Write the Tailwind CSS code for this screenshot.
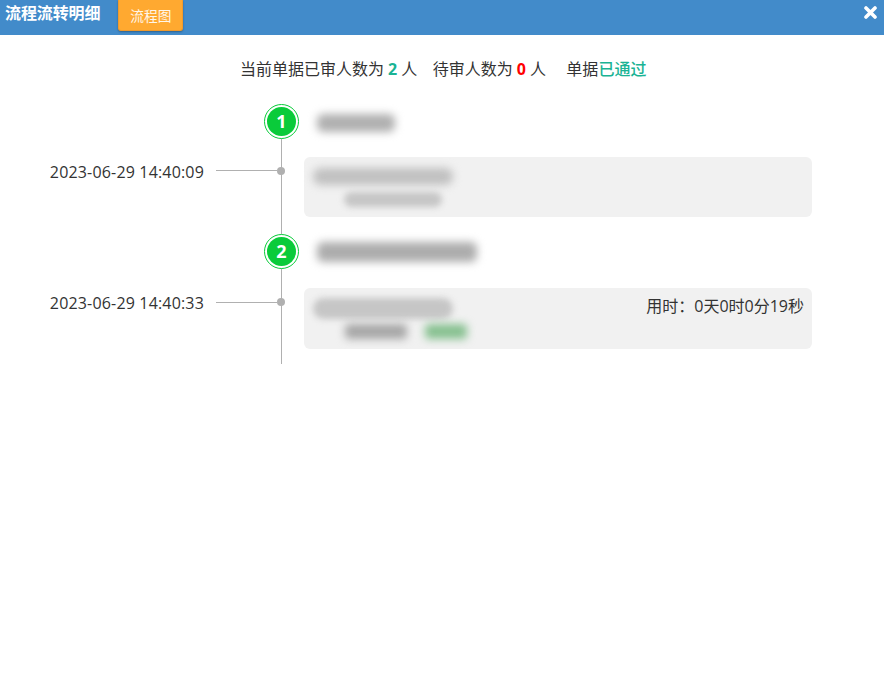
<!DOCTYPE html>
<html lang="zh">
<head>
<meta charset="utf-8" />
<title>流程流转明细</title>
<script src="https://cdn.jsdelivr.net/npm/@tailwindcss/browser@4"></script>
</head>
<body class="bg-white text-[#333] text-base font-['Open_Sans','Noto_Sans_CJK_SC',sans-serif]">
  <!-- header -->
  <div class="h-[35px] bg-[#428bca] flex items-start justify-between pl-[5px] pr-[7px]">
    <div class="flex items-start">
      <h1 class="text-base font-bold text-white leading-[27px] tracking-[-0.1px]">流程流转明细</h1>
      <button class="ml-[18px] w-[65px] h-[31px] bg-[#ffa930] border border-[#f09a2c] border-t-0 rounded-b-[3px] shadow-[0_1px_2px_rgba(0,0,0,0.3)] text-[13.7px] text-white/90 leading-[31px]">流程图</button>
    </div>
    <svg class="mt-[6px]" width="13" height="13" viewBox="0 0 13 13">
      <path d="M2 2 L11 11 M11 2 L2 11" stroke="#fff" stroke-width="3.6" stroke-linecap="round" fill="none" />
    </svg>
  </div>

  <!-- summary -->
  <p class="mt-[22px] pl-[240px] h-6 leading-6 whitespace-nowrap">
    当前单据已审人数为<b class="mx-[4px] text-[#1ab394]">2</b>人<span class="ml-[15.6px]">待审人数为</span><b class="mx-[4px] text-[#f00]">0</b>人<span class="ml-[20.4px]">单据</span><b class="font-medium text-[#1ab394]">已通过</b>
  </p>

  <!-- timeline -->
  <div class="relative mt-[23px] w-[812px]">
    <div class="absolute left-[281px] top-[17px] bottom-0 w-px bg-[#b0b0b0]"></div>

    <div class="relative flex items-center h-[35px] pl-[264px]">
      <div class="w-[35px] h-[35px] rounded-full border border-[#0acb3a] bg-white p-[2px]">
        <div class="w-full h-full rounded-full bg-[#0acb3a] text-white font-bold text-lg leading-[29px] text-center">1</div>
      </div>
      <div class="ml-[18px] w-[78px] h-[18px] mt-[2px] bg-[#b0b0b0] rounded-md blur-[4px]"></div>
    </div>
    <div class="relative flex items-start pt-[18px] pb-[17px]">
      <div class="w-[204px] text-right leading-[30px] whitespace-nowrap tracking-[0.17px]">2023-06-29 14:40:09</div>
      <div class="flex items-center h-[28px] ml-[12px]">
        <div class="w-[61px] h-px -mt-px bg-[#b0b0b0]"></div>
        <div class="w-2 h-2 rounded-full bg-[#b0b0b0]"></div>
      </div>
      <div class="ml-[19px] w-[508px] h-[60px] bg-[#f1f1f1] rounded-md px-[9px] pt-[11px]">
        <div class="w-[140px] h-[17px] bg-[#c0c0c0] rounded-lg blur-[4px]"></div>
        <div class="ml-[31px] mt-[7px] w-[98px] h-[15px] bg-[#c6c6c6] rounded-lg blur-[3px]"></div>
      </div>
    </div>

    <div class="relative flex items-center h-[35px] pl-[264px]">
      <div class="w-[35px] h-[35px] rounded-full border border-[#0acb3a] bg-white p-[2px]">
        <div class="w-full h-full rounded-full bg-[#0acb3a] text-white font-bold text-lg leading-[29px] text-center">2</div>
      </div>
      <div class="ml-[18px] w-[160px] h-[20px] bg-[#adadad] rounded-md blur-[4px]"></div>
    </div>
    <div class="relative flex items-start pt-[19px] pb-[15px]">
      <div class="w-[204px] text-right leading-[30px] whitespace-nowrap tracking-[0.17px]">2023-06-29 14:40:33</div>
      <div class="flex items-center h-[28px] ml-[12px]">
        <div class="w-[61px] h-px bg-[#b0b0b0]"></div>
        <div class="w-2 h-2 rounded-full bg-[#b0b0b0]"></div>
      </div>
      <div class="ml-[19px] w-[508px] h-[61px] bg-[#f1f1f1] rounded-md pl-[9px] pr-[8px] pt-[10px] flex justify-between">
        <div>
          <div class="w-[140px] h-[21px] bg-[#c6c6c6] rounded-xl blur-[3px]"></div>
          <div class="flex mt-[5px] ml-[32px]">
            <div class="w-[62px] h-[15px] bg-[#a6a6a6] rounded-sm blur-[4px]"></div>
            <div class="ml-[18px] w-[42px] h-[15px] bg-[#86c08f] rounded-sm blur-[4px]"></div>
          </div>
        </div>
        <div class="-mt-[4px] h-6 leading-6 whitespace-nowrap">用时：0天0时0分19秒</div>
      </div>
    </div>
  </div>
</body>
</html>
